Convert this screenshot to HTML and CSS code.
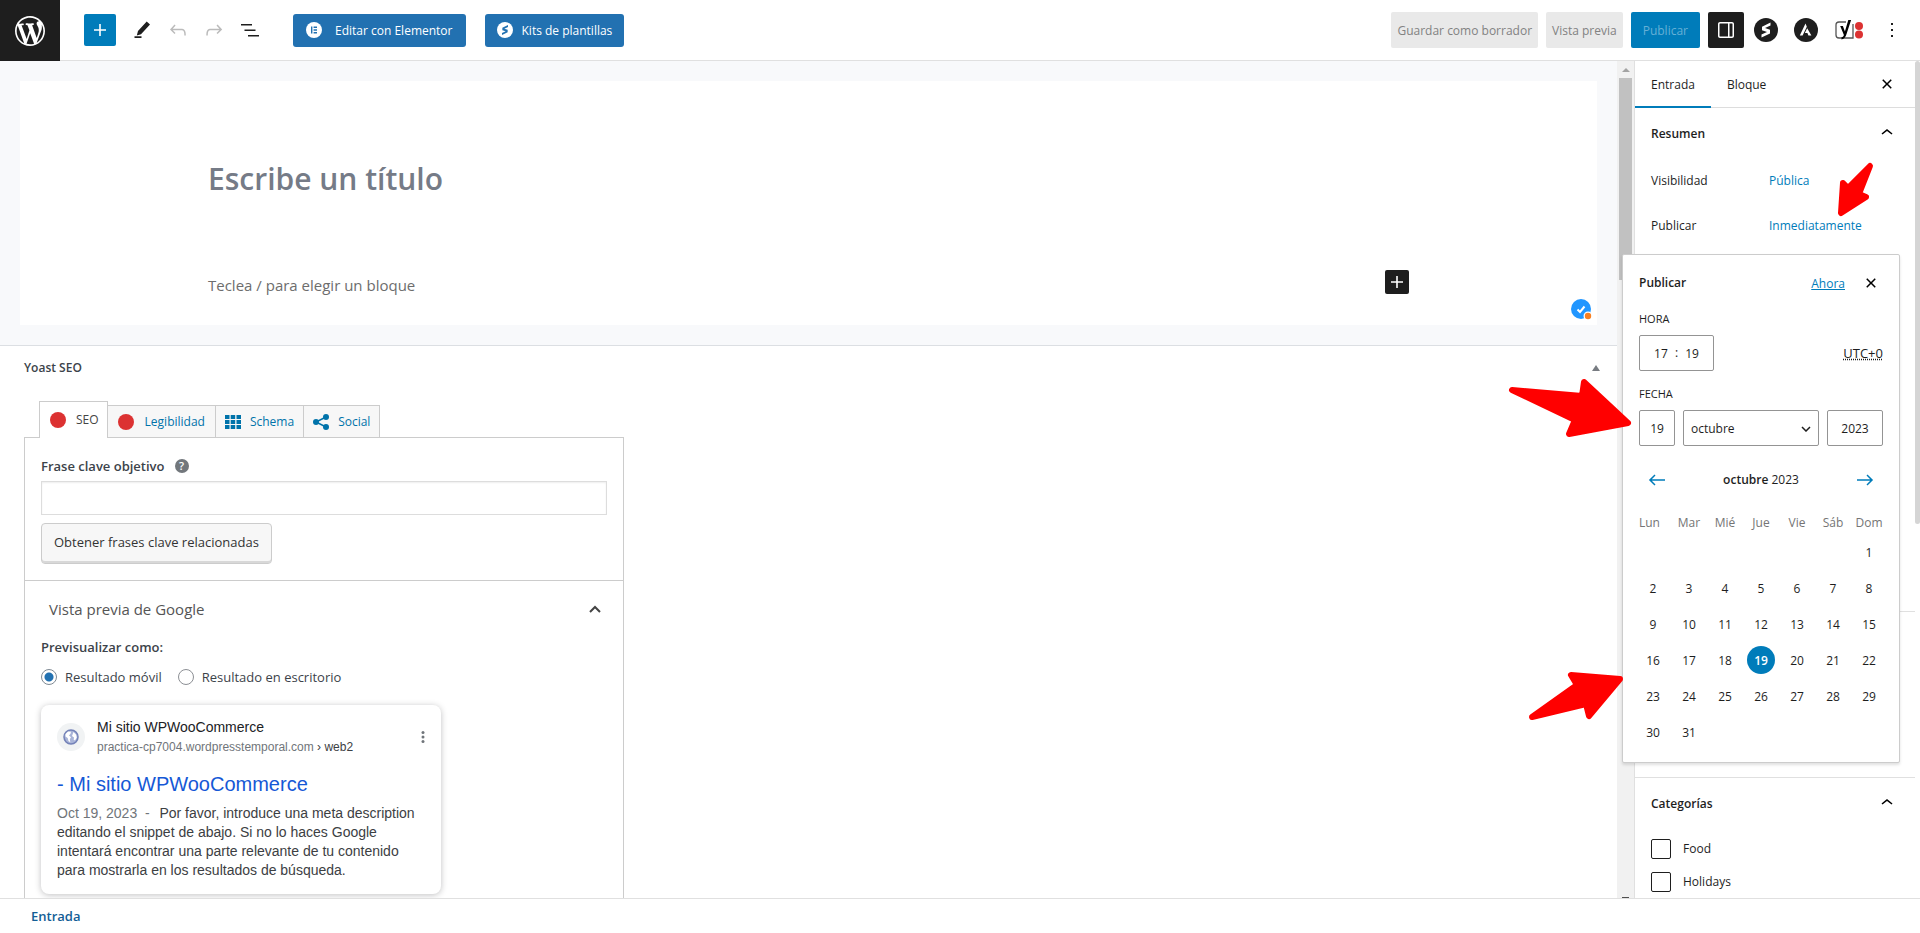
FILE: index.html
```html
<!DOCTYPE html>
<html lang="es">
<head>
  <meta charset="UTF-8">
  <meta name="viewport" content="width=device-width, initial-scale=1.0">
  <title>Añadir nueva entrada</title>
  <link rel="stylesheet" href="styles.css">
</head>
<body>
  <div class="editor">
    <header class="header">
      <a href="#" class="wp-logo" aria-label="Ver entradas">
        <svg viewBox="-2 -2 24 24" width="36" height="36"><path d="M20 10c0-5.51-4.49-10-10-10C4.48 0 0 4.49 0 10c0 5.52 4.48 10 10 10 5.51 0 10-4.48 10-10zM7.78 15.37L4.37 6.22c.55-.02 1.17-.08 1.17-.08.5-.06.44-1.13-.06-1.11 0 0-1.45.11-2.37.11-.18 0-.37 0-.58-.01C4.12 2.69 6.87 1.11 10 1.11c2.33 0 4.45.87 6.05 2.34-.68-.11-1.65.39-1.65 1.58 0 .74.45 1.36.9 2.1.35.61.55 1.36.55 2.46 0 1.49-1.4 5-1.4 5l-3.03-8.37c.54-.02.82-.17.82-.17.5-.05.44-1.25-.06-1.22 0 0-1.44.12-2.38.12-.87 0-2.33-.12-2.33-.12-.5-.03-.56 1.2-.06 1.22l.92.08 1.26 3.41zM17.41 10c.24-.64.74-1.87.43-4.25.7 1.29 1.05 2.71 1.05 4.25 0 3.29-1.73 6.24-4.4 7.78.97-2.59 1.94-5.2 2.92-7.78zM6.1 18.09C3.12 16.65 1.11 13.53 1.11 10c0-1.3.23-2.48.72-3.59C3.25 10.3 4.67 14.2 6.1 18.09zm4.03-6.63l2.58 6.98c-.86.29-1.76.45-2.71.45-.79 0-1.57-.11-2.29-.33.81-2.38 1.62-4.74 2.42-7.1z"/></svg>
      </a>
      <div class="tools">
        <button type="button" class="tool tool-add" aria-label="Añadir bloque"><svg viewBox="0 0 24 24" width="24" height="24"><path d="M18 11.2h-5.2V6h-1.6v5.2H6v1.6h5.2V18h1.6v-5.2H18z"/></svg></button>
        <button type="button" class="tool" aria-label="Herramientas"><svg viewBox="0 0 24 24" width="24" height="24"><path d="m20 6.500-3.300-3L8 13l-1.200 4.600 4.200-1.400L20 6.500Zm-8.500 11.700H4.500V20h7v-1.800Z"/></svg></button>
        <button type="button" class="tool" aria-label="Deshacer" disabled><svg viewBox="0 0 24 24" width="24" height="24"><path d="M18.3 11.7c-.6-.6-1.4-.9-2.3-.9H6.7l2.9-3.3-1.1-1-4.5 5L8.5 16l1-1-2.7-2.7H16c.5 0 .9.2 1.3.5 1 1 1 3.4 1 4.5v.3h1.5v-.2c0-1.5 0-4.3-1.5-5.7z"/></svg></button>
        <button type="button" class="tool" aria-label="Rehacer" disabled><svg viewBox="0 0 24 24" width="24" height="24"><path d="M15.6 6.5l-1.1 1 2.9 3.3H8c-.9 0-1.7.3-2.3.9-1.4 1.5-1.4 4.2-1.4 5.6v.2h1.5v-.3c0-1.1 0-3.5 1-4.5.3-.3.7-.5 1.3-.5h9.2L14.5 15l1.1 1.1 4.6-4.6-4.6-5z"/></svg></button>
        <button type="button" class="tool" aria-label="Vista de lista"><svg viewBox="0 0 24 24" width="24" height="24"><path d="M3 6h11v1.5H3V6Zm3.5 5.5h11V13h-11v-1.5ZM21 17H10v1.5h11V17Z"/></svg></button>
      </div>
      <div class="builders">
        <button type="button" class="btn-builder">
          <svg viewBox="0 0 16 16" width="16" height="16"><circle cx="8" cy="8" r="8" fill="#fff"/><path d="M5 4.5h1.4v7H5zM7.6 4.5H11v1.4H7.6zM7.6 7.3H11v1.4H7.6zM7.6 10.1H11v1.4H7.6z" fill="#2271b1"/></svg>
          Editar con Elementor
        </button>
        <button type="button" class="btn-builder btn-kits">
          <svg viewBox="0 0 24 24" width="16" height="16"><circle cx="12" cy="12" r="12" fill="#fff"/><path d="M16.5 4.5 8 8.7v3.5l5 1.8-5.5 2.6v3L16 15.500v-3.700l-5-1.800 5.500-2.600z" fill="#2271b1"/></svg>
          Kits de plantillas
        </button>
      </div>
      <div class="settings">
        <button type="button" class="btn btn-grey" disabled>Guardar como borrador</button>
        <button type="button" class="btn btn-grey" disabled>Vista previa</button>
        <button type="button" class="btn btn-publish" disabled>Publicar</button>
        <button type="button" class="btn btn-drawer" aria-label="Ajustes"><svg viewBox="0 0 24 24" width="24" height="24"><path d="M18 4H6c-1.100 0-2 .9-2 2v12c0 1.100.9 2 2 2h12c1.100 0 2-.9 2-2V6c0-1.100-.9-2-2-2zm-4 14.500H6c-.3 0-.5-.2-.5-.5V6c0-.3.2-.5.5-.5h8v13zm4.500-.5c0 .3-.2.5-.5.5h-2.500v-13H18c.3 0 .5.2.5.5v12z"/></svg></button>
        <button type="button" class="plugin" aria-label="Spectra"><svg viewBox="0 0 24 24" width="24" height="24"><circle cx="12" cy="12" r="12"/><path d="M16.500 4.500 8 8.700v3.500l5 1.800-5.500 2.600v3L16 15.500v-3.700l-5-1.800 5.500-2.600z" fill="#fff"/></svg></button>
        <button type="button" class="plugin" aria-label="Astra"><svg viewBox="0 0 24 24" width="24" height="24"><circle cx="12" cy="12" r="12"/><path d="M11.500 5.500 5.800 17.500h2.800l4.200-8.700zM13.200 10.200l-2.300 4.700h2.500l1 2.600h3z" fill="#fff"/></svg></button>
        <button type="button" class="plugin plugin-yoast" aria-label="Yoast SEO"><svg viewBox="0 0 28 24" width="28" height="24"><path d="M11 4H4a3 3 0 0 0-3 3v10a3 3 0 0 0 3 3h14V6" fill="#fff" stroke="#555" stroke-width="1.300"/><path d="M5.200 8h2.700l2 5.600L13.300 2h2.800l-4.400 13.500c-1 3.300-2.200 5.500-5.200 6v-2.300c1.500-.3 2.100-1.200 2.400-2.300z" fill="#000"/><circle cx="24" cy="8" r="4" fill="#dc3232"/><circle cx="24" cy="16.500" r="4" fill="#dc3232"/></svg></button>
        <button type="button" class="plugin" aria-label="Opciones"><svg viewBox="0 0 24 24" width="24" height="24"><path d="M13 19h-2v-2h2v2zm0-6h-2v-2h2v2zm0-6h-2V5h2v2z"/></svg></button>
      </div>
    </header>

    <div class="body">
      <main class="content">
        <section class="canvas">
          <div class="page">
            <h1 class="post-title">Escribe un título</h1>
            <div class="block-row">
              <p>Teclea / para elegir un bloque</p>
              <button type="button" class="inserter" aria-label="Añadir bloque"><svg viewBox="0 0 24 24" width="24" height="24"><path d="M18 11.200h-5.200V6h-1.600v5.200H6v1.600h5.200V18h1.600v-5.200H18z"/></svg></button>
            </div>
            <svg class="checker" viewBox="0 0 21 21" width="21" height="21"><circle cx="10" cy="10" r="10" fill="#2196ff"/><path d="m6.500 10.500 2.500 2.500 4.500-5.500" fill="none" stroke="#fff" stroke-width="2"/><circle cx="17" cy="17" r="4.500" fill="#fff"/><circle cx="17" cy="17" r="3.200" fill="#f77f21"/></svg>
          </div>
        </section>

        <section class="metabox">
          <div class="metabox-head">
            <h2>Yoast SEO</h2>
            <button type="button" aria-label="Alternar panel"><svg viewBox="0 0 8 6" width="8" height="6"><path d="M4 0 8 6H0z"/></svg></button>
          </div>
          <nav class="seo-tabs">
            <a href="#" class="seo-tab active"><span class="score"></span>SEO</a>
            <a href="#" class="seo-tab"><span class="score"></span>Legibilidad</a>
            <a href="#" class="seo-tab tab-icon"><svg viewBox="0 0 16 14" width="16" height="14"><path d="M0 0h4.500v4H0zM5.700 0h4.500v4H5.700zM11.500 0H16v4h-4.500zM0 5h4.500v4H0zM5.700 5h4.500v4H5.700zM11.500 5H16v4h-4.500zM0 10h4.500v4H0zM5.700 10h4.500v4H5.700zM11.500 10H16v4h-4.500z"/></svg>Schema</a>
            <a href="#" class="seo-tab tab-icon"><svg viewBox="0 0 16 16" width="16" height="16"><path d="M13 3 3 8l10 5" fill="none" stroke="#0073aa" stroke-width="1.500"/><circle cx="13" cy="3" r="3"/><circle cx="3" cy="8" r="3"/><circle cx="13" cy="13" r="3"/></svg>Social</a>
          </nav>
          <div class="seo-box">
            <div class="keyphrase">
              <div class="label-row">
                <label for="keyphrase">Frase clave objetivo</label>
                <span class="help">?</span>
              </div>
              <input type="text" id="keyphrase">
              <button type="button" class="btn-related">Obtener frases clave relacionadas</button>
            </div>
            <div class="preview">
              <button type="button" class="preview-toggle">Vista previa de Google
                <svg viewBox="0 0 12 8" width="12" height="8"><path d="m1 7 5-5 5 5" fill="none" stroke="#444" stroke-width="2"/></svg>
              </button>
              <p class="preview-as">Previsualizar como:</p>
              <div class="radios">
                <input type="radio" id="mobile" name="mode" checked><label for="mobile">Resultado móvil</label>
                <input type="radio" id="desktop" name="mode"><label for="desktop">Resultado en escritorio</label>
              </div>
              <article class="snippet">
                <div class="snippet-head">
                  <span class="favicon"><svg viewBox="0 0 16 16" width="16" height="16"><circle cx="8" cy="8" r="7" fill="#a9b4d8" stroke="#7482b8" stroke-width="1.500"/><path d="M2.500 5 5 2.500l3 .3-.5 2L6 6.500l2 1.700-1.200 2 .5 3L5.500 12l-.8-3L2.500 7.500zM10.500 3l2.500 2.500.8 3-1.800 3-1.300-.8.3-2.200L9 7z" fill="#fff"/></svg></span>
                  <div class="site">
                    <div class="site-name">Mi sitio WPWooCommerce</div>
                    <div class="site-url">practica-cp7004.wordpresstemporal.com <span>› web2</span></div>
                  </div>
                  <svg class="snippet-dots" viewBox="0 0 4 12" width="4" height="12"><circle cx="2" cy="1.500" r="1.500"/><circle cx="2" cy="6" r="1.500"/><circle cx="2" cy="10.500" r="1.500"/></svg>
                </div>
                <a href="#" class="snippet-title">- Mi sitio WPWooCommerce</a>
                <p class="snippet-desc"><span>Oct 19, 2023 &nbsp;-&nbsp; </span>Por favor, introduce una meta description editando el snippet de abajo. Si no lo haces Google intentará encontrar una parte relevante de tu contenido para mostrarla en los resultados de búsqueda.</p>
              </article>
            </div>
          </div>
        </section>
      </main>

      <div class="scrollbar">
        <svg viewBox="0 0 8 4" width="8" height="4"><path d="M4 0 8 4H0z" fill="#a3a3a3"/></svg>
        <div class="scroll-thumb"></div>
        <div class="scroll-end"></div>
      </div>

      <aside class="sidebar">
        <div class="sidebar-scroll">
          <div class="side-tabs">
            <button type="button" class="side-tab active">Entrada</button>
            <button type="button" class="side-tab">Bloque</button>
            <button type="button" class="icon-btn" aria-label="Cerrar ajustes"><svg viewBox="0 0 24 24" width="24" height="24"><path d="M12 13.060l3.712 3.713 1.061-1.060L13.061 12l3.712-3.712-1.060-1.060L12 10.938 8.288 7.227l-1.061 1.060L10.939 12l-3.712 3.712 1.060 1.061L12 13.061z"/></svg></button>
          </div>
          <section class="panel panel-summary">
            <button type="button" class="panel-title">Resumen
              <svg viewBox="0 0 24 24" width="24" height="24"><path d="M6.500 12.400L12 8l5.500 4.400-.9 1.200L12 10l-4.500 3.600-1-1.200z"/></svg>
            </button>
            <div class="panel-row"><span>Visibilidad</span><button type="button" class="link-btn">Pública</button></div>
            <div class="panel-row"><span>Publicar</span><button type="button" class="link-btn">Inmediatamente</button></div>
          </section>
          <section class="panel panel-covered"></section>
          <section class="panel">
            <button type="button" class="panel-title">Categorías
              <svg viewBox="0 0 24 24" width="24" height="24"><path d="M6.500 12.400L12 8l5.500 4.400-.9 1.200L12 10l-4.500 3.600-1-1.200z"/></svg>
            </button>
            <div class="category"><input type="checkbox" id="food"><label for="food">Food</label></div>
            <div class="category"><input type="checkbox" id="holidays"><label for="holidays">Holidays</label></div>
          </section>
        </div>
        <div class="side-scrollbar"></div>

        <div class="popover">
          <div class="pop-head">
            <h2>Publicar</h2>
            <button type="button" class="link-btn now">Ahora</button>
            <button type="button" class="icon-btn" aria-label="Cerrar"><svg viewBox="0 0 24 24" width="24" height="24"><path d="M12 13.060l3.712 3.713 1.061-1.060L13.061 12l3.712-3.712-1.060-1.060L12 10.938 8.288 7.227l-1.061 1.060L10.939 12l-3.712 3.712 1.060 1.061L12 13.061z"/></svg></button>
          </div>
          <label class="legend" for="hours">Hora</label>
          <div class="time-row">
            <div class="time-box">
              <input type="text" id="hours" value="17"><span>:</span><input type="text" aria-label="Minutos" value="19">
            </div>
            <abbr class="zone">UTC+0</abbr>
          </div>
          <label class="legend" for="day">Fecha</label>
          <div class="date-row">
            <input type="text" id="day" class="day-input" value="19">
            <div class="month">
              <select aria-label="Mes"><option>octubre</option></select>
              <svg viewBox="0 0 10 6" width="10" height="6"><path d="m1 1 4 4 4-4" fill="none" stroke="#1e1e1e" stroke-width="1.500"/></svg>
            </div>
            <input type="text" class="year-input" aria-label="Año" value="2023">
          </div>
          <div class="month-nav">
            <button type="button" aria-label="Mes anterior"><svg viewBox="0 0 24 24" width="24" height="24"><path d="M20 11.200H6.800l3.700-3.700-1-1L3.900 12l5.600 5.500 1-1-3.700-3.700H20z"/></svg></button>
            <div><strong>octubre</strong> 2023</div>
            <button type="button" aria-label="Mes siguiente"><svg viewBox="0 0 24 24" width="24" height="24"><path d="m14.500 6.500-1 1 3.700 3.700H4v1.600h13.200l-3.700 3.700 1 1 5.600-5.500z"/></svg></button>
          </div>
          <table class="calendar">
            <thead>
              <tr><th>Lun</th><th>Mar</th><th>Mié</th><th>Jue</th><th>Vie</th><th>Sáb</th><th>Dom</th></tr>
            </thead>
            <tbody>
              <tr><td></td><td></td><td></td><td></td><td></td><td></td><td><button type="button">1</button></td></tr>
              <tr><td><button type="button">2</button></td><td><button type="button">3</button></td><td><button type="button">4</button></td><td><button type="button">5</button></td><td><button type="button">6</button></td><td><button type="button">7</button></td><td><button type="button">8</button></td></tr>
              <tr><td><button type="button">9</button></td><td><button type="button">10</button></td><td><button type="button">11</button></td><td><button type="button">12</button></td><td><button type="button">13</button></td><td><button type="button">14</button></td><td><button type="button">15</button></td></tr>
              <tr><td><button type="button">16</button></td><td><button type="button">17</button></td><td><button type="button">18</button></td><td><button type="button" class="selected">19</button></td><td><button type="button">20</button></td><td><button type="button">21</button></td><td><button type="button">22</button></td></tr>
              <tr><td><button type="button">23</button></td><td><button type="button">24</button></td><td><button type="button">25</button></td><td><button type="button">26</button></td><td><button type="button">27</button></td><td><button type="button">28</button></td><td><button type="button">29</button></td></tr>
              <tr><td><button type="button">30</button></td><td><button type="button">31</button></td><td></td><td></td><td></td><td></td><td></td></tr>
            </tbody>
          </table>
        </div>
      </aside>
    </div>

    <footer class="footer"><a href="#">Entrada</a></footer>

    <!-- red pointers over the publish date -->
    <svg class="pointers" viewBox="1500 150 420 600" width="420" height="600">
      <path d="M1870 166 1859 194 1866 197 1841 213 1843 183 1848 188z"/>
      <path d="M1512 390 1582 396 1584 382 1628 423 1569 434 1575 420z"/>
      <path d="M1532 717 1577 685 1571 675 1620 679 1589 716 1586 704z"/>
    </svg>
  </div>
</body>
</html>
```
FILE: styles.css
```css
* {
    box-sizing: border-box;
}
body {
    margin: 0;
    font-family: "Open Sans", "Noto Sans", sans-serif;
    font-size: 12px;
    line-height: 20px;
    color: #1e1e1e;
    background: #fff;
}
h1, h2, p {
    margin: 0;
}
button, input, select {
    font-family: inherit;
    font-size: inherit;
    color: inherit;
}
button {
    padding: 0;
    border: none;
    background: none;
    cursor: pointer;
}
svg {
    display: block;
    flex-shrink: 0;
}
a {
    text-decoration: none;
}
.editor {
    position: relative;
    display: flex;
    flex-direction: column;
    height: 100vh;
    overflow: hidden;
}

/* Top bar */
.header {
    display: flex;
    align-items: center;
    height: 61px;
    flex-shrink: 0;
    border-bottom: 1px solid #e0e0e0;
}
.wp-logo {
    display: flex;
    align-items: center;
    justify-content: center;
    align-self: stretch;
    width: 60px;
    margin-bottom: -1px;
    background: #1e1e1e;
    fill: #fff;
}
.tools {
    display: flex;
    gap: 4px;
    margin-left: 24px;
}
.tool {
    display: flex;
    align-items: center;
    justify-content: center;
    width: 32px;
    height: 32px;
    fill: #1e1e1e;
}
.tool-add {
    margin-right: 6px;
    border-radius: 2px;
    background: #007cba;
    fill: #fff;
}
.tool:disabled {
    fill: #bbb;
}
.builders {
    display: flex;
    gap: 19px;
    margin-left: 27px;
}
.btn-builder {
    display: flex;
    align-items: center;
    gap: 13px;
    height: 33px;
    padding: 0 13px;
    border-radius: 3px;
    background: #2271b1;
    color: #fff;
}
.btn-kits {
    gap: 9px;
    padding: 0 12px;
}
.settings {
    display: flex;
    align-items: center;
    gap: 8px;
    margin-left: auto;
    padding-right: 12px;
}
.btn {
    display: flex;
    align-items: center;
    justify-content: center;
    height: 36px;
    padding: 0 6px;
    border-radius: 2px;
}
.btn-grey {
    background: #e9e9e9;
    color: #828282;
}
.btn-publish {
    padding: 0 12px;
    background: #007cba;
    color: #66b0d6;
}
.btn-drawer {
    background: #1e1e1e;
    fill: #fff;
}
.plugin {
    display: flex;
    justify-content: center;
    width: 28px;
    margin: 0 2px;
    fill: #1e1e1e;
}
.btn-drawer + .plugin {
    margin-left: 0;
}
.plugin-yoast {
    width: 34px;
}

/* Layout */
.body {
    display: flex;
    flex: 1;
    min-height: 0;
}
.content {
    flex: 1;
    overflow: hidden;
}
.canvas {
    padding: 20px;
    background: #f8f9fb;
    border-bottom: 1px solid #dcdfe3;
}
.page {
    position: relative;
    padding: 76px 188px 27px;
    background: #fff;
}
.post-title {
    margin-bottom: 70px;
    font-size: 30px;
    line-height: 44px;
    font-weight: 600;
    color: #757b87;
}
.block-row {
    display: flex;
    align-items: center;
    justify-content: space-between;
    font-size: 15px;
    color: #6d6d6d;
    height: 27px;
}
.inserter {
    border-radius: 2px;
    background: #1e1e1e;
    fill: #fff;
    margin-bottom: 6px;
}
.checker {
    position: absolute;
    right: 5px;
    bottom: 5px;
}

/* Yoast metabox */
.metabox {
    padding: 0 24px;
    color: #3c434a;
}
.metabox-head {
    display: flex;
    align-items: center;
    justify-content: space-between;
    height: 44px;
    margin-bottom: 11px;
}
.metabox-head h2 {
    font-size: 12px;
    font-weight: 600;
}
.metabox-head svg {
    margin-right: -7px;
    fill: #787c82;
}
.seo-tabs {
    display: flex;
    align-items: flex-end;
    padding-left: 15px;
}
.seo-tab {
    display: flex;
    align-items: center;
    gap: 11px;
    height: 32px;
    margin-left: -1px;
    padding: 0 10px;
    border: 1px solid #ccc;
    border-bottom: none;
    background: #f7f7f7;
    color: #0073aa;
    fill: #0073aa;
}
.seo-tab.active {
    z-index: 1;
    gap: 10px;
    height: 37px;
    margin: 0 0 -1px;
    padding-right: 8px;
    background: #fff;
    color: #444;
}
.seo-tab.tab-icon {
    gap: 9px;
    padding: 0 9px;
}
.score {
    width: 16px;
    height: 16px;
    border-radius: 50%;
    background: #dc3232;
}
.seo-box {
    max-width: 600px;
    border: 1px solid #ccc;
}
.keyphrase {
    padding: 18px 16px 16px;
    border-bottom: 1px solid #ccc;
}
.label-row {
    display: flex;
    align-items: center;
    gap: 10px;
    margin-bottom: 5px;
    font-size: 13px;
    font-weight: 600;
}
.help {
    width: 14px;
    height: 14px;
    border-radius: 50%;
    background: #72777c;
    color: #fff;
    font-size: 11px;
    line-height: 14px;
    text-align: center;
}
.keyphrase input {
    display: block;
    width: 100%;
    height: 34px;
    margin-bottom: 8px;
    border: 1px solid #ddd;
    box-shadow: inset 0 1px 2px rgba(0, 0, 0, 0.07);
}
.btn-related {
    height: 41px;
    padding: 0 12px 4px;
    border: 1px solid #ccc;
    border-radius: 4px;
    background: #f7f7f7;
    box-shadow: inset 0 -2px 0 #d8d8d8;
    color: #333;
    font-size: 13px;
}
.preview {
    padding: 0 16px 24px;
}
.preview-toggle {
    display: flex;
    align-items: center;
    justify-content: space-between;
    width: 100%;
    height: 56px;
    padding: 0 6px 0 8px;
    color: #555;
    font-size: 15px;
}
.preview-as {
    margin-bottom: 10px;
    font-size: 13px;
    font-weight: 600;
}
.radios {
    display: flex;
    align-items: center;
    font-size: 13px;
}
.radios input {
    appearance: none;
    width: 16px;
    height: 16px;
    margin: 0 8px 0 0;
    border: 1px solid #8c8f94;
    border-radius: 50%;
}
.radios input:checked {
    border-color: #7e8993;
    background: radial-gradient(circle, #2271b1 4px, #fff 5px);
}
.radios label {
    margin-right: 16px;
}
.snippet {
    max-width: 400px;
    margin-top: 18px;
    padding: 12px 16px;
    border-radius: 8px;
    box-shadow: 0 1px 6px rgba(32, 33, 36, 0.28);
    font-family: "Liberation Sans", Arial, sans-serif;
}
.snippet-head {
    display: flex;
    align-items: center;
    gap: 12px;
}
.favicon {
    display: flex;
    align-items: center;
    justify-content: center;
    width: 28px;
    height: 28px;
    border-radius: 50%;
    background: #f1f3f4;
}
.site {
    flex: 1;
}
.site-name {
    font-size: 14px;
    color: #202124;
}
.site-url {
    color: #70757a;
}
.site-url span {
    color: #3c4043;
}
.snippet-dots {
    fill: #70757a;
}
.snippet-title {
    display: block;
    margin: 14px 0 7px;
    font-size: 20px;
    line-height: 26px;
    color: #1558d6;
}
.snippet-desc {
    padding-bottom: 2px;
    font-size: 14px;
    line-height: 19px;
    color: #3c4043;
}
.snippet-desc span {
    margin-right: 2px;
    color: #70757a;
}

/* Content scrollbar */
.scrollbar {
    display: flex;
    flex-direction: column;
    align-items: center;
    width: 17px;
    padding-top: 7px;
    background: #f1f1f1;
}
.scroll-thumb {
    width: 13px;
    height: 202px;
    margin-top: 6px;
    background: #c1c1c1;
}
.scroll-end {
    width: 7px;
    height: 1px;
    margin-top: auto;
    background: #505050;
}

/* Sidebar */
.sidebar {
    position: relative;
    display: flex;
    width: 286px;
    border-left: 1px solid #e0e0e0;
}
.sidebar-scroll {
    flex: 1;
    overflow: hidden;
}
.side-scrollbar {
    width: 5px;
    height: 463px;
    border-radius: 3px;
    background: #d5d5d5;
}
.side-tabs {
    display: flex;
    align-items: center;
    height: 47px;
    padding-right: 16px;
    border-bottom: 1px solid #ddd;
}
.side-tab {
    height: 47px;
    padding: 0 16px;
}
.side-tab.active {
    box-shadow: inset 0 -2px 0 #007cba;
}
.side-tabs .icon-btn {
    margin-left: auto;
}
.panel {
    padding: 0 16px 16px;
    border-bottom: 1px solid #e0e0e0;
}
.panel-summary {
    height: 504px;
}
.panel-covered {
    height: 166px;
}
.panel-title {
    display: flex;
    align-items: center;
    justify-content: space-between;
    width: 100%;
    height: 50px;
    font-weight: 600;
}
.panel-row {
    display: flex;
    align-items: center;
    height: 45px;
}
.panel-row span {
    width: 118px;
}
.link-btn {
    color: #007cba;
}
.category {
    display: flex;
    align-items: center;
    gap: 12px;
    height: 33px;
}
.panel-title + .category {
    margin-top: 4px;
}
.category input {
    appearance: none;
    width: 20px;
    height: 20px;
    margin: 0;
    border: 1px solid #1e1e1e;
    border-radius: 2px;
}

/* Publish popover */
.popover {
    position: absolute;
    top: 193px;
    right: 20px;
    width: 278px;
    padding: 16px 16px 12px;
    border: 1px solid #ccc;
    border-radius: 2px;
    background: #fff;
    box-shadow: 0 2px 3px rgba(0, 0, 0, 0.12);
}
.pop-head {
    display: flex;
    align-items: center;
    gap: 14px;
    margin-bottom: 16px;
}
.pop-head h2 {
    flex: 1;
    font-size: 12px;
    font-weight: 600;
}
.now {
    text-decoration: underline;
}
.legend {
    display: block;
    margin-bottom: 8px;
    font-size: 11px;
    line-height: 16px;
    text-transform: uppercase;
}
.time-row {
    display: flex;
    align-items: center;
    justify-content: space-between;
    margin-bottom: 15px;
}
.time-box {
    display: flex;
    align-items: center;
    justify-content: center;
    width: 75px;
    height: 36px;
    border: 1px solid #949494;
    border-radius: 2px;
}
.time-box input {
    width: 28px;
    padding: 0;
    border: none;
    text-align: center;
}
.zone {
    font-size: 13px;
    text-decoration: underline dotted;
}
.date-row {
    display: flex;
    gap: 8px;
    margin-bottom: 16px;
}
.date-row input, .date-row select {
    height: 36px;
    padding: 0 7px;
    border: 1px solid #949494;
    border-radius: 2px;
    background: #fff;
}
.date-row input {
    text-align: center;
}
.date-row .day-input {
    width: 36px;
}
.date-row .year-input {
    width: 56px;
}
.month {
    position: relative;
    flex: 1;
}
.month select {
    appearance: none;
    width: 100%;
}
.month svg {
    position: absolute;
    top: 16px;
    right: 8px;
    pointer-events: none;
}
.month-nav {
    display: flex;
    align-items: center;
    justify-content: space-between;
    height: 36px;
    padding: 0 6px;
}
.month-nav strong {
    font-weight: 600;
}
.month-nav button {
    fill: #007cba;
}
.calendar {
    width: 252px;
    margin: 14px -4px 0;
    border-collapse: collapse;
    table-layout: fixed;
}
.calendar th {
    height: 22px;
    padding: 0;
    font-weight: 400;
    color: #757575;
}
.calendar th:first-child {
    padding-left: 4px;
    text-align: left;
}
.calendar td {
    height: 36px;
    padding: 0;
    text-align: center;
}
.calendar button {
    width: 28px;
    height: 28px;
    border-radius: 50%;
}
.calendar .selected {
    background: #007cba;
    color: #fff;
    font-weight: 600;
}

.footer {
    height: 35px;
    flex-shrink: 0;
    padding: 7px 31px;
    border-top: 1px solid #e0e0e0;
}
.footer a {
    color: #135e96;
    font-size: 13px;
    font-weight: 600;
}
.pointers {
    position: absolute;
    top: 150px;
    right: 0;
    fill: #f00;
    stroke: #f00;
    stroke-width: 6;
    stroke-linejoin: round;
    pointer-events: none;
}
```
